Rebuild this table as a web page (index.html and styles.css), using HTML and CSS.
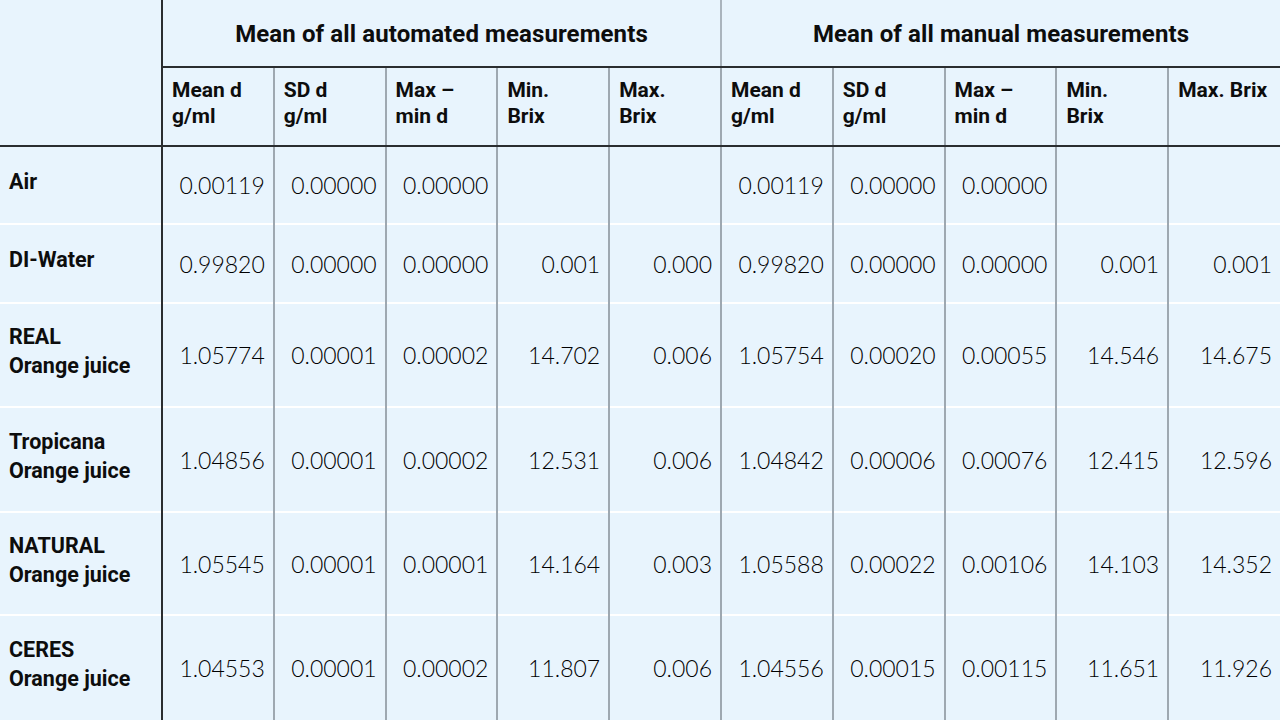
FILE: index.html
```html
<!DOCTYPE html>
<html>
<head>
<meta charset="utf-8">
<link rel="stylesheet" href="styles.css">
</head>
<body>
<table class="grid">
  <colgroup>
    <col class="c-label">
    <col span="10" class="c-data">
  </colgroup>
  <thead>
    <tr class="r-group">
      <th class="corner" rowspan="2"></th>
      <th class="group" colspan="5">Mean of all automated measurements</th>
      <th class="group" colspan="5">Mean of all manual measurements</th>
    </tr>
    <tr class="r-sub">
      <th class="sub">Mean d<br>g/ml</th>
      <th class="sub">SD d<br>g/ml</th>
      <th class="sub">Max –<br>min d</th>
      <th class="sub">Min.<br>Brix</th>
      <th class="sub">Max.<br>Brix</th>
      <th class="sub">Mean d<br>g/ml</th>
      <th class="sub">SD d<br>g/ml</th>
      <th class="sub">Max –<br>min d</th>
      <th class="sub">Min.<br>Brix</th>
      <th class="sub">Max. Brix</th>
    </tr>
  </thead>
  <tbody>
    <tr class="r-short">
      <th class="label">Air</th>
      <td>0.00119</td><td>0.00000</td><td>0.00000</td><td></td><td></td>
      <td>0.00119</td><td>0.00000</td><td>0.00000</td><td></td><td></td>
    </tr>
    <tr class="r-short2">
      <th class="label">DI-Water</th>
      <td>0.99820</td><td>0.00000</td><td>0.00000</td><td>0.001</td><td>0.000</td>
      <td>0.99820</td><td>0.00000</td><td>0.00000</td><td>0.001</td><td>0.001</td>
    </tr>
    <tr class="r-tall">
      <th class="label">REAL<br>Orange juice</th>
      <td>1.05774</td><td>0.00001</td><td>0.00002</td><td>14.702</td><td>0.006</td>
      <td>1.05754</td><td>0.00020</td><td>0.00055</td><td>14.546</td><td>14.675</td>
    </tr>
    <tr class="r-tall2">
      <th class="label">Tropicana<br>Orange juice</th>
      <td>1.04856</td><td>0.00001</td><td>0.00002</td><td>12.531</td><td>0.006</td>
      <td>1.04842</td><td>0.00006</td><td>0.00076</td><td>12.415</td><td>12.596</td>
    </tr>
    <tr class="r-tall3">
      <th class="label">NATURAL<br>Orange juice</th>
      <td>1.05545</td><td>0.00001</td><td>0.00001</td><td>14.164</td><td>0.003</td>
      <td>1.05588</td><td>0.00022</td><td>0.00106</td><td>14.103</td><td>14.352</td>
    </tr>
    <tr class="r-tall2 last">
      <th class="label">CERES<br>Orange juice</th>
      <td>1.04553</td><td>0.00001</td><td>0.00002</td><td>11.807</td><td>0.006</td>
      <td>1.04556</td><td>0.00015</td><td>0.00115</td><td>11.651</td><td>11.926</td>
    </tr>
  </tbody>
</table>
</body>
</html>
```

FILE: styles.css
```css
html, body {
  margin: 0;
  padding: 0;
  background: #e8f4fd;
  overflow: hidden;
}

.grid {
  width: 1280px;
  border-collapse: collapse;
  table-layout: fixed;
  color: #111;
}

.c-label { width: 162px; }
.c-data { width: 111.8px; }

th, td {
  padding: 0;
  box-sizing: border-box;
}

th {
  font-family: "Roboto", "Liberation Sans", Arial, sans-serif;
  font-weight: 700;
  text-align: left;
  color: #0d0d0d;
}

.corner {
  border-right: 2px solid #2a2d30;
  border-bottom: 2px solid #2a2d30;
}

.r-group { height: 67px; }

.group {
  font-size: 24px;
  text-align: center;
  letter-spacing: 0.1px;
  border-bottom: 2px solid #2a2d30;
  border-left: 2px solid #aab4bd;
  vertical-align: middle;
  padding-top: 1px;
}

.r-sub { height: 79px; }

.sub {
  font-size: 21px;
  line-height: 26px;
  vertical-align: top;
  padding: 9px 4px 0 9px;
  border-left: 2px solid #9ea8b1;
  border-bottom: 2px solid #2a2d30;
}

.grid .sub:first-child { border-left: 2px solid #2a2d30; }

.label {
  font-size: 21.5px;
  line-height: 29px;
  padding: 0 0 8px 9px;
  vertical-align: middle;
  border-right: 2px solid #2a2d30;
  border-top: 2px solid #ffffff;
}

td {
  font-family: "Lato", "Open Sans", sans-serif;
  font-weight: 300;
  font-size: 23px;
  text-align: right;
  padding-right: 8px;
  padding-top: 0;
  vertical-align: middle;
  border-left: 2px solid #9ea8b1;
  border-top: 2px solid #ffffff;
  color: #000;
}

tbody tr:first-child .label,
tbody tr:first-child td { border-top: none; }

.r-short { height: 78px; }
.r-short2 { height: 79px; }
.r-tall { height: 104px; }
.r-tall2 { height: 105px; }
.r-tall3 { height: 103px; }
```
